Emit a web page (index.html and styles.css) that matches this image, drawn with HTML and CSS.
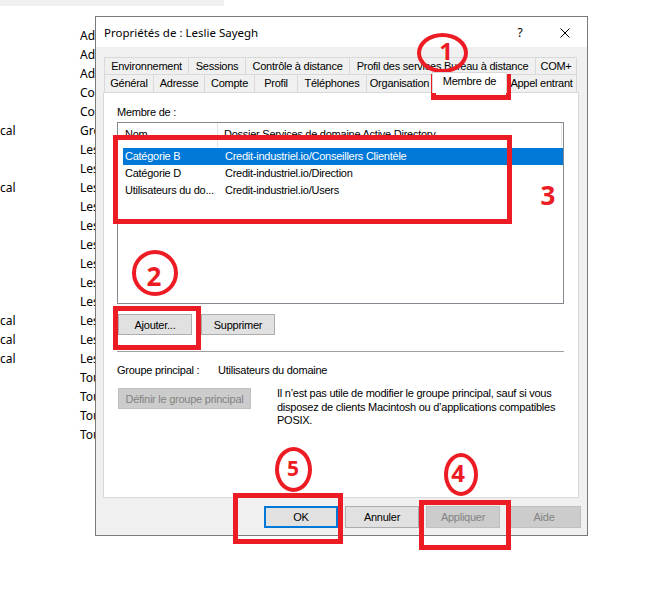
FILE: index.html
```html
<!DOCTYPE html>
<html lang="fr">
<head>
<meta charset="utf-8">
<title>Propriétés de : Leslie Sayegh</title>
<link rel="stylesheet" href="styles.css">
</head>
<body>
<div class="topbar"></div>
<div class="bglist">
  <div class="bgrow"><span class="bt"></span><span class="bn">Ad</span></div>
  <div class="bgrow"><span class="bt"></span><span class="bn">Ad</span></div>
  <div class="bgrow"><span class="bt"></span><span class="bn">Ad</span></div>
  <div class="bgrow"><span class="bt"></span><span class="bn">Co</span></div>
  <div class="bgrow"><span class="bt"></span><span class="bn">Co</span></div>
  <div class="bgrow"><span class="bt">cal</span><span class="bn">Gro</span></div>
  <div class="bgrow"><span class="bt"></span><span class="bn">Les</span></div>
  <div class="bgrow"><span class="bt"></span><span class="bn">Les</span></div>
  <div class="bgrow"><span class="bt">cal</span><span class="bn">Les</span></div>
  <div class="bgrow"><span class="bt"></span><span class="bn">Les</span></div>
  <div class="bgrow"><span class="bt"></span><span class="bn">Les</span></div>
  <div class="bgrow"><span class="bt"></span><span class="bn">Les</span></div>
  <div class="bgrow"><span class="bt"></span><span class="bn">Les</span></div>
  <div class="bgrow"><span class="bt"></span><span class="bn">Les</span></div>
  <div class="bgrow"><span class="bt"></span><span class="bn">Les</span></div>
  <div class="bgrow"><span class="bt">cal</span><span class="bn">Les</span></div>
  <div class="bgrow"><span class="bt">cal</span><span class="bn">Les</span></div>
  <div class="bgrow"><span class="bt">cal</span><span class="bn">Les</span></div>
  <div class="bgrow"><span class="bt"></span><span class="bn">Tou</span></div>
  <div class="bgrow"><span class="bt"></span><span class="bn">Tou</span></div>
  <div class="bgrow"><span class="bt"></span><span class="bn">Tou</span></div>
  <div class="bgrow"><span class="bt"></span><span class="bn">Tou</span></div>
</div>

<div class="dialog">
  <div class="titlebar">
    <span class="title">Propriétés de : Leslie Sayegh</span>
    <span class="help">?</span>
    <span class="close"><svg width="10" height="10" viewBox="0 0 10 10"><path d="M0.5 0.5 L9.5 9.5 M9.5 0.5 L0.5 9.5" stroke="#000" stroke-width="1" fill="none"/></svg></span>
  </div>
  <div class="dbody">
    <div class="tabs">
      <div class="tabrow row1">
        <div class="tab">Environnement</div>
        <div class="tab">Sessions</div>
        <div class="tab">Contrôle à distance</div>
        <div class="tab">Profil des services Bureau à distance</div>
        <div class="tab last">COM+</div>
      </div>
      <div class="tabrow row2">
        <div class="tab">Général</div>
        <div class="tab">Adresse</div>
        <div class="tab">Compte</div>
        <div class="tab">Profil</div>
        <div class="tab">Téléphones</div>
        <div class="tab">Organisation</div>
        <div class="tab active">Membre de</div>
        <div class="tab last">Appel entrant</div>
      </div>
    </div>
    <div class="panel">
      <div class="lbl">Membre de :</div>
      <div class="listbox">
        <div class="lhead">
          <div class="hc hc1">Nom</div>
          <div class="hc hc2">Dossier Services de domaine Active Directory</div>
        </div>
        <div class="lrows">
          <div class="lrow sel"><div class="c1">Catégorie B</div><div class="c2">Credit-industriel.io/Conseillers Clientèle</div></div>
          <div class="lrow"><div class="c1">Catégorie D</div><div class="c2">Credit-industriel.io/Direction</div></div>
          <div class="lrow"><div class="c1">Utilisateurs du do...</div><div class="c2">Credit-industriel.io/Users</div></div>
        </div>
      </div>
      <div class="btnrow">
        <button class="btn">Ajouter...</button>
        <button class="btn">Supprimer</button>
      </div>
      <div class="sep"></div>
      <div class="prim"><span class="plabel">Groupe principal :</span><span>Utilisateurs du domaine</span></div>
      <div class="primrow">
        <button class="btn dis wide">Définir le groupe principal</button>
        <p class="desc">Il n’est pas utile de modifier le groupe principal, sauf si vous<br>disposez de clients Macintosh ou d’applications compatibles<br>POSIX.</p>
      </div>
    </div>
    <div class="footer">
      <button class="btn fbtn def">OK</button>
      <button class="btn fbtn">Annuler</button>
      <button class="btn fbtn dis">Appliquer</button>
      <button class="btn fbtn dis">Aide</button>
    </div>
  </div>
</div>

<div class="mark ell e1"></div>
<div class="mark num n1">1</div>
<div class="mark box r1"></div>
<div class="mark box r3"></div>
<div class="mark num n3">3</div>
<div class="mark ell e2"></div>
<div class="mark num n2">2</div>
<div class="mark box r2"></div>
<div class="mark ell e5"></div>
<div class="mark num n5">5</div>
<div class="mark box r5"></div>
<div class="mark ell e4"></div>
<div class="mark num n4">4</div>
<div class="mark box r4"></div>
</body>
</html>
```

FILE: styles.css
```css
* { box-sizing: border-box; }
html, body { margin: 0; padding: 0; }
body {
  width: 659px;
  height: 613px;
  overflow: hidden;
  position: relative;
  background: #fff;
  color: #000;
  font-family: "Liberation Sans", Arial, sans-serif;
  font-size: 11px;
}

/* background list behind the dialog */
.topbar { width: 224px; height: 6px; background: #f0f0f0; }
.bglist {
  margin-top: 20px;
  font-family: "Noto Sans", "Liberation Sans", sans-serif;
  font-size: 12px;
}
.bgrow {
  display: grid;
  grid-template-columns: 80px auto;
  height: 19px;
  line-height: 19px;
  white-space: nowrap;
}
.bt { padding-left: 0; }

/* dialog window */
.dialog {
  position: absolute;
  left: 95px;
  top: 16px;
  width: 493px;
  height: 520px;
  border: 1px solid #7a7a7a;
  background: #f0f0f0;
  display: flex;
  flex-direction: column;
}
.titlebar {
  height: 30px;
  background: #fff;
  display: flex;
  align-items: center;
  font-family: "Noto Sans", "Liberation Sans", sans-serif;
  font-size: 11.5px;
}
.title { flex: 1; padding-left: 8px; padding-top: 1px; }
.help { width: 46px; text-align: center; font-size: 12px; padding-top: 1px; }
.close { width: 44px; display: flex; justify-content: center; align-items: center; padding-top: 1px; }
.close svg { display: block; }

.dbody {
  flex: 1;
  padding: 10px 6px 0 7px;
  display: flex;
  flex-direction: column;
  letter-spacing: -0.25px;
}
.tabs { margin: 0 3px 0 1px; }
.tabrow { display: grid; }
.row1 { grid-template-columns: 84px 57px 104px 186px 42px; height: 17px; }
.row2 { grid-template-columns: 49px 51px 50px 43px 69px 66px 75px 70px; height: 18px; }
.tab {
  border-top: 1px solid #d9d9d9;
  border-left: 1px solid #d9d9d9;
  text-align: center;
  white-space: nowrap;
  overflow: hidden;
  line-height: 16px;
}
.tab.last { border-right: 1px solid #d9d9d9; }
.row2 .tab { line-height: 17px; }
.tab.active {
  position: relative;
  z-index: 1;
  background: #fff;
  margin-top: -2px;
  margin-bottom: -1px;
  border-right: 1px solid #d9d9d9;
  line-height: 16px;
}
.tab.active + .tab { border-left: none; }

.panel {
  height: 406px;
  margin-right: 2px;
  background: #fff;
  border: 1px solid #d9d9d9;
  padding: 12px 0 0 13px;
}
.lbl { line-height: 14px; height: 14px; margin-bottom: 3px; }
.listbox {
  width: 447px;
  height: 182px;
  border: 1px solid #828790;
  background: #fff;
}
.lhead {
  display: flex;
  height: 24px;
  line-height: 22px;
  width: 444px;
  border-right: 1px solid #e5e5e5;
}
.hc1 { width: 100px; padding-left: 7px; border-right: 1px solid #e5e5e5; }
.hc2 { padding-left: 6px; white-space: nowrap; }
.lrows { padding-top: 1px; }
.lrow {
  display: flex;
  height: 17px;
  line-height: 17px;
  margin-left: 5px;
  white-space: nowrap;
}
.lrow .c1 { width: 95px; padding-left: 2px; }
.lrow .c2 { padding-left: 7px; }
.lrow.sel { background: #0078d7; color: #fff; }

.btn {
  width: 74px;
  height: 21px;
  padding: 0;
  border: 1px solid #adadad;
  background: #e1e1e1;
  color: #000;
  font: inherit;
  letter-spacing: inherit;
}
.btn.dis { background: #cccccc; border-color: #bfbfbf; color: #838383; }
.btn.def { border: 2px solid #0078d7; }
.btnrow { display: flex; gap: 9px; margin-top: 10px; padding-left: 1px; }
.sep { width: 447px; height: 1px; background: #a0a0a0; margin-top: 16px; }
.prim { display: flex; margin-top: 11px; line-height: 14px; }
.plabel { width: 101px; }
.primrow { display: flex; align-items: flex-start; margin-top: 11px; padding-left: 1px; }
.btn.wide { width: 133px; }
.desc { margin: -1px 0 0 26px; line-height: 13.5px; white-space: nowrap; }

.footer {
  display: flex;
  justify-content: flex-end;
  gap: 7px;
  margin-top: 8px;
}
.fbtn { height: 22px; }

/* red annotations */
.mark { position: absolute; }
.box { border: 5px solid #ed1c24; }
.ell { border: 4px solid #ed1c24; border-radius: 50%; }
.num {
  color: #ed1c24;
  font-family: "Noto Sans", "Liberation Sans", sans-serif;
  font-weight: 700;
  line-height: 1;
  width: 30px;
  text-align: center;
}
.e1 { left: 417px; top: 33px; width: 51px; height: 40px; }
.n1 { left: 431px; top: 39px; font-size: 24px; }
.r1 { left: 431px; top: 74px; width: 80px; height: 26px; }
.r3 { left: 113px; top: 135px; width: 399px; height: 89px; }
.n3 { left: 533px; top: 182px; font-size: 26px; }
.e2 { left: 132px; top: 250px; width: 46px; height: 46px; }
.n2 { left: 139px; top: 263px; font-size: 26px; }
.r2 { left: 113px; top: 306px; width: 88px; height: 44px; }
.e5 { left: 275px; top: 447px; width: 37px; height: 45px; }
.n5 { left: 278px; top: 458px; font-size: 21px; }
.r5 { left: 233px; top: 493px; width: 110px; height: 51px; }
.e4 { left: 444px; top: 453px; width: 34px; height: 43px; }
.n4 { left: 443px; top: 461px; font-size: 24px; }
.r4 { left: 419px; top: 500px; width: 92px; height: 50px; }
```
